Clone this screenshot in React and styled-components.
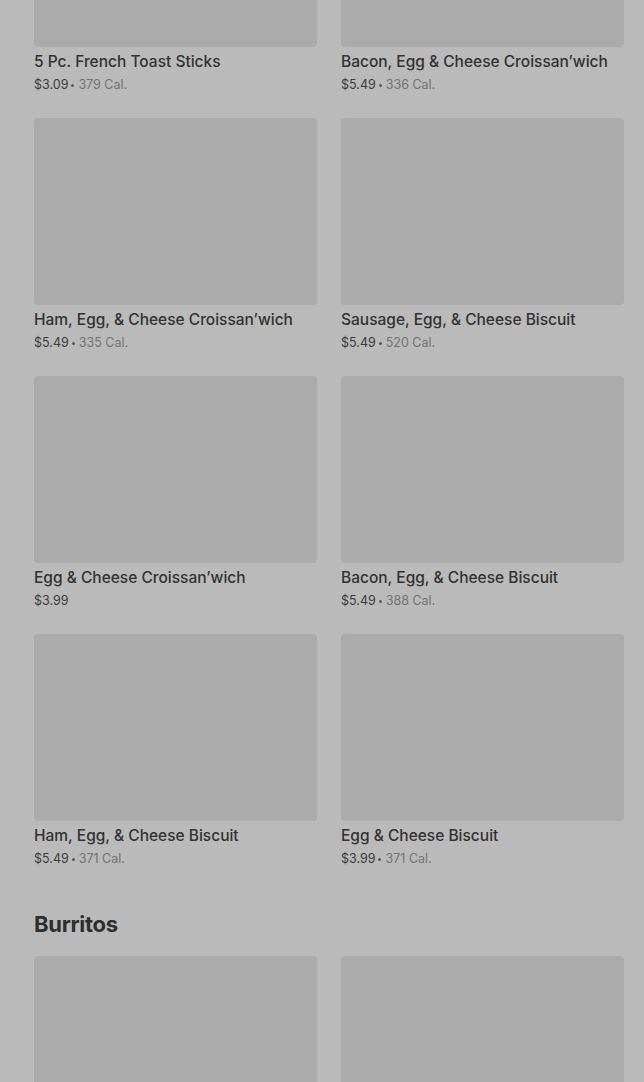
import React from "react";
import styled, { createGlobalStyle } from "styled-components";

const Global = createGlobalStyle`
  html, body { margin: 0; padding: 0; background: #bababa; }
  body { font-family: Inter, "Noto Sans", Arial, sans-serif; color: #2e2e2e; overflow: hidden; }
`;

const Page = styled.main`
  padding: 0 20px 0 34px;
  margin-top: -140px;
`;

const Section = styled.section`
  display: flex;
  flex-direction: column;
`;

const Heading = styled.h2`
  margin: 42px 0 18px;
  font-size: 22px;
  line-height: 28px;
  font-weight: 700;
  letter-spacing: -0.3px;
  color: #2e2e2e;
`;

const Grid = styled.div`
  display: grid;
  grid-template-columns: 283px 283px;
  column-gap: 24px;
  row-gap: 24px;
`;

const Card = styled.article`
  display: flex;
  flex-direction: column;
`;

const Thumb = styled.div`
  height: 187px;
  background: #ababab;
  border-radius: 4px;
`;

const Title = styled.h3`
  margin: 5px 0 0;
  font-size: 15.5px;
  line-height: 20px;
  font-weight: 500;
  color: #323232;
  white-space: nowrap;
`;

const Meta = styled.div`
  margin-top: 4px;
  font-size: 12.5px;
  line-height: 18px;
  color: #3a3a3a;
  display: flex;
  align-items: center;
`;

const Cal = styled.span`
  color: #727272;
`;

const Dot = styled.span`
  width: 3px;
  height: 3px;
  border-radius: 50%;
  background: #5a5a5a;
  margin: 1px 4px 0 3px;
`;

const breakfast = [
  { name: "5 Pc. French Toast Sticks", price: "$3.09", cal: "379 Cal." },
  { name: "Bacon, Egg & Cheese Croissan’wich", price: "$5.49", cal: "336 Cal." },
  { name: "Ham, Egg, & Cheese Croissan’wich", price: "$5.49", cal: "335 Cal." },
  { name: "Sausage, Egg, & Cheese Biscuit", price: "$5.49", cal: "520 Cal." },
  { name: "Egg & Cheese Croissan’wich", price: "$3.99", cal: "" },
  { name: "Bacon, Egg, & Cheese Biscuit", price: "$5.49", cal: "388 Cal." },
  { name: "Ham, Egg, & Cheese Biscuit", price: "$5.49", cal: "371 Cal." },
  { name: "Egg & Cheese Biscuit", price: "$3.99", cal: "371 Cal." },
];

const burritos = [{ id: "b1" }, { id: "b2" }];

function Item({ item }) {
  return (
    <Card>
      <Thumb />
      {item.name && <Title>{item.name}</Title>}
      {item.price && (
        <Meta>
          <span>{item.price}</span>
          {item.cal && (
            <>
              <Dot />
              <Cal>{item.cal}</Cal>
            </>
          )}
        </Meta>
      )}
    </Card>
  );
}

export default function App() {
  return (
    <>
      <Global />
      <Page>
        <Section>
          <Grid>
            {breakfast.map((it) => (
              <Item key={it.name} item={it} />
            ))}
          </Grid>
        </Section>
        <Section>
          <Heading>Burritos</Heading>
          <Grid>
            {burritos.map((it) => (
              <Item key={it.id} item={it} />
            ))}
          </Grid>
        </Section>
      </Page>
    </>
  );
}
